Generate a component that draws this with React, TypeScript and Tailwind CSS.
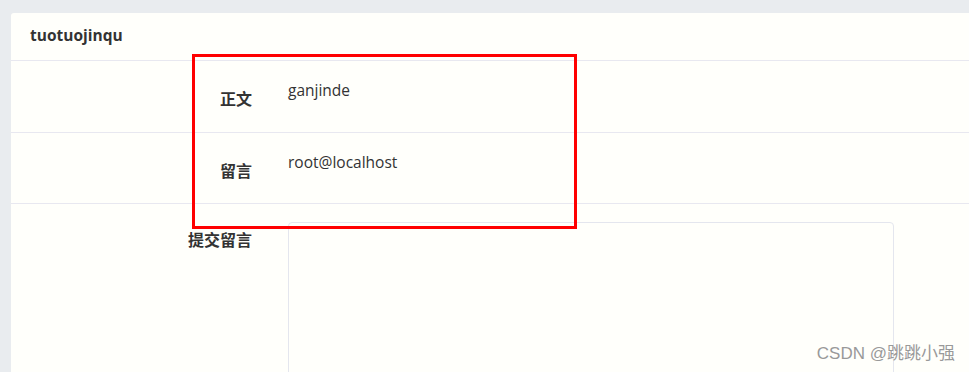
import React from 'react';

const font = { fontFamily: '"Open Sans", "Noto Sans CJK SC", sans-serif' };

function Row({ label, value, h }: { label: string; value: string; h: string }) {
  return (
    <div className={`flex border-b border-[#e8e8f0] ${h}`}>
      <div className="w-[241px] shrink-0 pt-[26px] text-right text-[16px] font-bold text-[#333]">{label}</div>
      <div className="ml-[36px] pt-[18px] text-[15.5px] text-[#333]">{value}</div>
    </div>
  );
}

export default function App() {
  return (
    <div className="relative h-[372px] w-[969px] overflow-hidden bg-[#e9ecef] pl-[11px] pt-[13px]" style={font}>
      <div className="h-[400px] w-[980px] rounded-tl-[3px] bg-[#fffffb]">
        <div className="flex h-[48px] items-center border-b border-[#e8e8f0] pl-[19px] pb-[2px] text-[15.5px] font-bold text-[#333]">
          tuotuojinqu
        </div>
        <Row label="正文" value="ganjinde" h="h-[72px]" />
        <Row label="留言" value="root@localhost" h="h-[71px]" />
        <div className="flex pt-[18px]">
          <div className="w-[241px] shrink-0 pt-[6px] text-right text-[16px] font-bold text-[#333]">提交留言</div>
          <div className="ml-[36px] h-[200px] w-[606px] rounded-[4px] border border-[#e4e6ee] bg-[#fffffb]"></div>
        </div>
      </div>
      <div className="absolute left-[192px] top-[54px] h-[175px] w-[385px] border-[3px] border-[#ff0000]"></div>
      <div className="absolute right-[14px] top-[341px] text-[17px] text-[#999] [text-shadow:0_0_1px_#fff]" style={{ fontFamily: '"Liberation Sans", "Noto Sans CJK SC", sans-serif' }}>
        CSDN @跳跳小强
      </div>
    </div>
  );
}
